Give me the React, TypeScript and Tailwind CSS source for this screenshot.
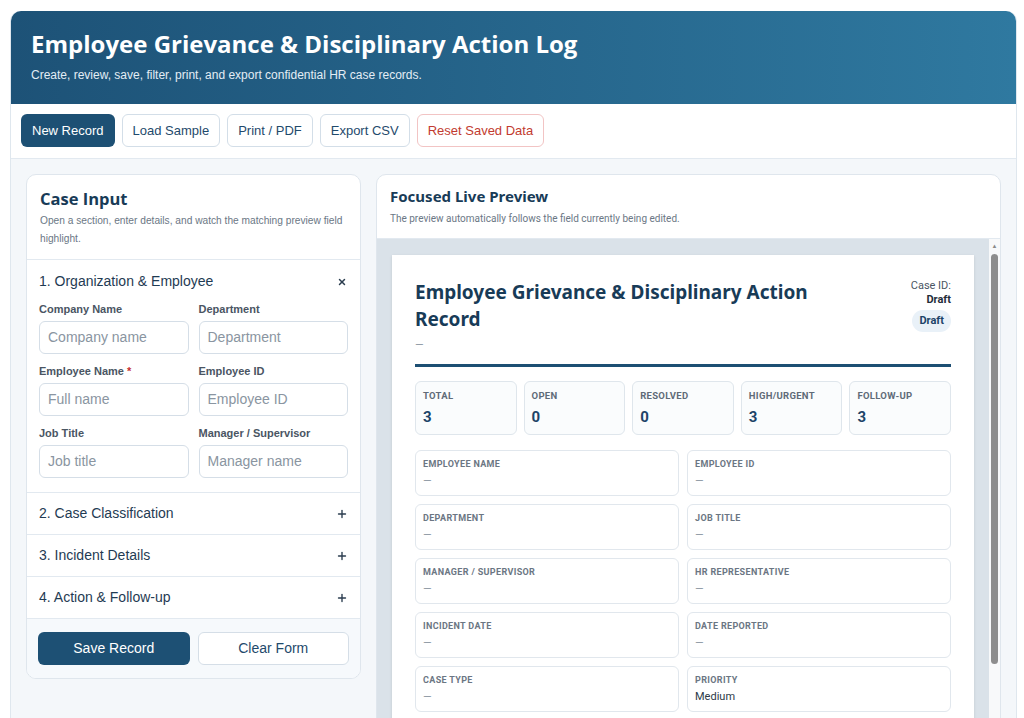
import { X, Plus } from "lucide-react";

const stats = [
  { label: "Total", value: "3" },
  { label: "Open", value: "0" },
  { label: "Resolved", value: "0" },
  { label: "High/Urgent", value: "3" },
  { label: "Follow-up", value: "3" },
];

const fields = [
  { label: "Employee Name", value: "—" },
  { label: "Employee ID", value: "—" },
  { label: "Department", value: "—" },
  { label: "Job Title", value: "—" },
  { label: "Manager / Supervisor", value: "—" },
  { label: "HR Representative", value: "—" },
  { label: "Incident Date", value: "—" },
  { label: "Date Reported", value: "—" },
  { label: "Case Type", value: "—" },
  { label: "Priority", value: "Medium" },
];

const inputs = [
  { label: "Company Name", placeholder: "Company name" },
  { label: "Department", placeholder: "Department" },
  { label: "Employee Name", placeholder: "Full name", required: true },
  { label: "Employee ID", placeholder: "Employee ID" },
  { label: "Job Title", placeholder: "Job title" },
  { label: "Manager / Supervisor", placeholder: "Manager name" },
];

const sections = ["2. Case Classification", "3. Incident Details", "4. Action & Follow-up"];

const toolbarBtn = "h-[33px] px-[10px] rounded-[6px] border text-[13px] bg-white";

export default function App() {
  return (
    <div className="h-[718px] overflow-hidden bg-white font-['Liberation_Sans',Arial,sans-serif]">
      <div className="ml-[10px] mr-[7px] mt-[11px] rounded-t-[10px] border-x border-[#dfe7ee] bg-[#f4f7fa]">
        {/* header */}
        <div className="rounded-t-[10px] bg-gradient-to-r from-[#1d5277] to-[#2f79a0] px-[20px] pt-[17px] pb-[21px] text-white">
          <h1 className="font-['Open_Sans',sans-serif] text-[24px] font-bold leading-[32px]">
            Employee Grievance &amp; Disciplinary Action Log
          </h1>
          <p className="mt-[7px] text-[12px] leading-[16px] text-[#e3edf5]">
            Create, review, save, filter, print, and export confidential HR case records.
          </p>
        </div>

        {/* toolbar */}
        <div className="flex gap-[7px] border-b border-[#e2e9f0] bg-white px-[10px] pt-[10px] pb-[11px]">
          <button className="h-[33px] rounded-[6px] bg-[#1d5074] px-[11px] text-[13px] text-white">
            New Record
          </button>
          <button className={`${toolbarBtn} border-[#d3dee8] text-[#1f4a6c]`}>Load Sample</button>
          <button className={`${toolbarBtn} border-[#d3dee8] text-[#1f4a6c]`}>Print / PDF</button>
          <button className={`${toolbarBtn} border-[#d3dee8] text-[#1f4a6c]`}>Export CSV</button>
          <button className={`${toolbarBtn} border-[#f2c4c4] text-[#c23b30]`}>Reset Saved Data</button>
        </div>

        {/* main */}
        <div className="grid grid-cols-[335px_1fr] items-start gap-[15px] px-[15px] pt-[15px]">
          {/* left card */}
          <div className="overflow-hidden rounded-[10px] border border-[#dfe6ed] bg-white">
            <div className="border-b border-[#e2e9f0] px-[13px] pt-[13px] pb-[11px]">
              <h2 className="font-['Open_Sans',sans-serif] text-[16.5px] font-bold leading-[22px] text-[#183b57]">
                Case Input
              </h2>
              <p className="mt-[2px] text-[10.2px] leading-[18px] text-[#6b7785]">
                Open a section, enter details, and watch the matching preview field highlight.
              </p>
            </div>

            <div className="border-b border-[#e2e9f0] px-[12px] pb-[14px]">
              <div className="flex h-[43px] items-center justify-between">
                <span className="text-[14px] text-[#1f3b53]">1. Organization &amp; Employee</span>
                <X size={10} strokeWidth={3.5} className="mr-[1px] text-[#2b3d4f]" />
              </div>
              <div className="grid grid-cols-2 gap-x-[10px] gap-y-[11px]">
                {inputs.map((f) => (
                  <div key={f.label}>
                    <label className="mb-[5px] block text-[11px] font-bold leading-[13px] text-[#4a5563]">
                      {f.label}
                      {f.required && <span className="text-[#c53030]"> *</span>}
                    </label>
                    <div className="flex h-[33px] items-center rounded-[6px] border border-[#d5dee7] px-[8px] text-[14px] text-[#8a95a1]">
                      {f.placeholder}
                    </div>
                  </div>
                ))}
              </div>
            </div>

            {sections.map((s) => (
              <div
                key={s}
                className="flex h-[42px] items-center justify-between border-b border-[#e2e9f0] px-[12px]"
              >
                <span className="text-[14px] text-[#1f3b53]">{s}</span>
                <Plus size={12} strokeWidth={2.75} className="mr-[0px] text-[#2b3d4f]" />
              </div>
            ))}

            <div className="grid grid-cols-2 gap-[8px] bg-[#f6f9fc] px-[11px] py-[13px]">
              <button className="h-[33px] rounded-[6px] bg-[#1d5074] text-[14px] text-white">
                Save Record
              </button>
              <button className="h-[33px] rounded-[6px] border border-[#d5dee7] bg-white text-[14px] text-[#1f4a6c]">
                Clear Form
              </button>
            </div>
          </div>

          {/* right card */}
          <div className="overflow-hidden rounded-t-[10px] border border-[#dfe6ed] bg-white">
            <div className="border-b border-[#e2e9f0] px-[13px] pt-[11px] pb-[12px]">
              <h2 className="font-['Noto_Sans',sans-serif] text-[15px] font-bold leading-[20px] text-[#183b57]">
                Focused Live Preview
              </h2>
              <p className="mt-[6px] font-['Roboto',sans-serif] text-[10px] leading-[14px] text-[#6b7785]">
                The preview automatically follows the field currently being edited.
              </p>
            </div>

            <div className="flex h-[560px]">
              <div className="flex-1 overflow-hidden bg-[#dae2e9] px-[15px] pt-[16px]">
                <div className="bg-white px-[23px] pt-[24px] pb-[24px] font-['Roboto',sans-serif] shadow-sm">
                  <div className="flex items-start justify-between">
                    <div>
                      <h3 className="w-[420px] font-['Noto_Sans',sans-serif] text-[19px] font-bold leading-[27px] text-[#183b57]">
                        Employee Grievance &amp; Disciplinary Action Record
                      </h3>
                      <div className="mt-[4px] text-[11px] text-[#8a95a1]">—</div>
                    </div>
                    <div className="flex flex-col items-end text-[11px] leading-[14px] text-[#4a5563]">
                      <span>Case ID:</span>
                      <span className="font-bold text-[#1f2d3a]">Draft</span>
                      <span className="mt-[3px] rounded-full bg-[#e9f1f8] px-[7px] py-[4px] text-[11px] font-bold leading-[14px] text-[#1d4468]">
                        Draft
                      </span>
                    </div>
                  </div>

                  <div className="mt-[10px] h-[3px] bg-[#1d4f73]" />

                  <div className="mt-[14px] grid grid-cols-5 gap-[7px]">
                    {stats.map((s) => (
                      <div
                        key={s.label}
                        className="h-[54px] rounded-[6px] border border-[#dfe6ec] bg-[#fafcfd] px-[7px] pt-[8px]"
                      >
                        <div className="text-[9.5px] font-bold uppercase leading-[12px] tracking-[0.3px] text-[#5f6b78]">
                          {s.label}
                        </div>
                        <div className="mt-[6px] text-[15px] font-bold leading-[18px] text-[#1d4468]">
                          {s.value}
                        </div>
                      </div>
                    ))}
                  </div>

                  <div className="mt-[15px] grid grid-cols-2 gap-x-[8px] gap-y-[8px]">
                    {fields.map((f) => (
                      <div
                        key={f.label}
                        className="h-[46px] rounded-[6px] border border-[#e1e7ed] px-[7px] pt-[7px]"
                      >
                        <div className="text-[9px] font-bold uppercase leading-[12px] tracking-[0.35px] text-[#6b7683]">
                          {f.label}
                        </div>
                        <div
                          className={`mt-[4px] text-[11px] leading-[14px] ${
                            f.value === "—" ? "text-[#8a95a1]" : "text-[#2d3a47]"
                          }`}
                        >
                          {f.value}
                        </div>
                      </div>
                    ))}
                  </div>
                </div>
              </div>

              {/* scrollbar */}
              <div className="flex w-[11px] flex-col items-center bg-[#f8f9fa]">
                <span className="mt-[3px] text-[6px] leading-[8px] text-[#8a8a8a]">▲</span>
                <div className="mt-[4px] h-[410px] w-[7px] rounded-full bg-[#8d8d8d]" />
              </div>
            </div>
          </div>
        </div>
      </div>
    </div>
  );
}
